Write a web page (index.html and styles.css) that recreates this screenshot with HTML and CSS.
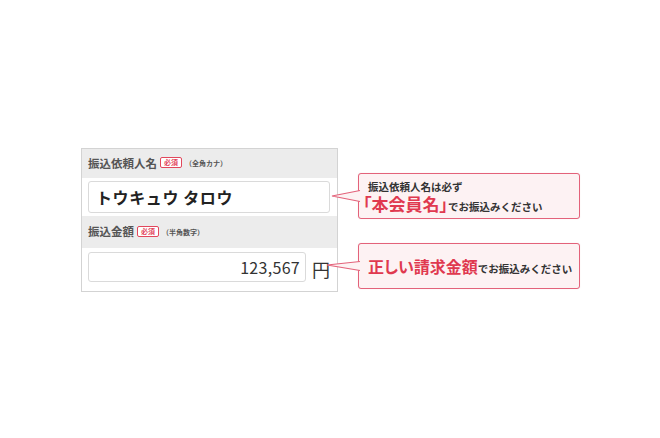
FILE: index.html
```html
<!DOCTYPE html>
<html lang="ja">
<head>
<meta charset="utf-8">
<title>振込情報</title>
<link rel="stylesheet" href="styles.css">
</head>
<body>
<div class="stage">
  <div class="form">
    <div class="head head1">
      <span class="label">振込依頼人名</span><span class="badge">必須</span><span class="note">（全角カナ）</span>
    </div>
    <div class="row row-name">
      <div class="field name">トウキュウ タロウ</div>
    </div>
    <div class="head head2">
      <span class="label">振込金額</span><span class="badge">必須</span><span class="note">（半角数字）</span>
    </div>
    <div class="row row-amount">
      <div class="field amount">123,567</div><span class="yen">円</span>
    </div>
  </div>
  <div class="callouts">
    <div class="callout c1">
      <svg class="tail tail1" width="29" height="14" viewBox="0 0 29 14"><path d="M29,1.5 L1,7 L29,12.5" /></svg>
      <p class="l1">振込依頼人名は必ず</p>
      <p class="l2"><span class="em em1">「本会員名」</span><span class="sm">でお振込みください</span></p>
    </div>
    <div class="callout c2">
      <svg class="tail tail2" width="34" height="14" viewBox="0 0 34 14"><path d="M34,2.5 L1,6 L34,11.5" /></svg>
      <p class="l2"><span class="em em2">正しい請求金額</span><span class="sm">でお振込みください</span></p>
    </div>
  </div>
</div>
</body>
</html>
```

FILE: styles.css
```css
html, body {
  margin: 0;
  padding: 0;
  background: #ffffff;
}

body {
  font-family: "Noto Sans CJK JP", "Noto Sans", sans-serif;
  color: #333;
}

.stage {
  display: flex;
  align-items: flex-start;
  gap: 20px;
  padding: 148px 0 0 81px;
}

.form {
  width: 257px;
  box-sizing: border-box;
  border: 1px solid #d3d3d3;
  background: #fff;
}

.head {
  display: flex;
  align-items: center;
  background: #ececec;
  padding-left: 6px;
  height: 29px;
}

.head2 {
  height: 32px;
}

.label {
  font-size: 11.5px;
  font-weight: 700;
  color: #555;
  line-height: 1;
}

.badge {
  margin-left: 3px;
  margin-bottom: 2px;
  border: 1px solid #e2475c;
  border-radius: 2px;
  background: #fff;
  color: #e2475c;
  font-size: 7px;
  line-height: 9px;
  padding: 0 3px;
  font-weight: 700;
}

.note {
  margin-left: 3px;
  font-size: 7px;
  font-weight: 700;
  color: #555;
  line-height: 1;
}

.row {
  padding: 3px 7px 3px 6px;
}

.field {
  box-sizing: border-box;
  border: 1px solid #dadada;
  border-radius: 3px;
  background: #fff;
  display: flex;
  align-items: center;
}

.name {
  height: 32px;
  padding-left: 7px;
  font-size: 16px;
  font-weight: 700;
  letter-spacing: 0.6px;
  color: #222;
}

.row-amount {
  display: flex;
  align-items: center;
  gap: 6px;
  padding: 4px 7px 9px 6px;
}

.amount {
  width: 219px;
  height: 30px;
  justify-content: flex-end;
  padding-right: 5px;
  font-size: 16px;
  letter-spacing: 0.3px;
  color: #333;
}

.yen {
  font-size: 18px;
  color: #333;
  line-height: 1;
  margin-top: 4px;
}

.callouts {
  display: flex;
  flex-direction: column;
  gap: 24px;
  padding-top: 25px;
}

.callout {
  position: relative;
  width: 222px;
  height: 46px;
  box-sizing: border-box;
  border: 1.5px solid #e3627a;
  border-radius: 3px;
  background: #fdf2f3;
  padding-left: 9px;
  box-shadow: 0 0 1px rgba(200, 80, 100, 0.25);
}

.c1 {
  padding-top: 6px;
}

.c2 {
  display: flex;
  align-items: center;
}

.callout p {
  margin: 0;
}

.l1 {
  font-size: 10.5px;
  font-weight: 700;
  line-height: 13px;
  color: #333;
}

.l2 {
  display: flex;
  align-items: baseline;
  white-space: nowrap;
}

.c1 .l2 {
  margin-top: 2px;
}

.em {
  display: inline-block;
  color: #e0394f;
  font-weight: 700;
  line-height: 18px;
  font-feature-settings: "palt";
}

.em1 {
  font-size: 17px;
  margin-left: -5px;
}

.em2 {
  font-size: 16px;
}

.sm {
  display: inline-block;
  font-size: 10.5px;
  line-height: 12px;
  font-weight: 700;
  color: #333;
}

.tail {
  position: absolute;
  top: 50%;
  transform: translateY(-50%);
  overflow: visible;
}

.tail path {
  fill: #fdf2f3;
  stroke: #e3627a;
  stroke-width: 1.2;
}

.tail1 {
  left: -28px;
}

.tail2 {
  left: -33px;
}
```
